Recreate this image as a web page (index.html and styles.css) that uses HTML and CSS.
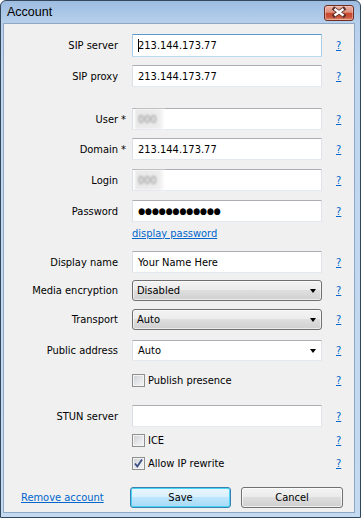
FILE: index.html
```html
<!DOCTYPE html>
<html>
<head>
<meta charset="utf-8">
<link rel="stylesheet" href="styles.css">
</head>
<body>
<div class="window">
  <div class="titlebar">
    <span class="title">Account</span>
    <div class="close">
      <svg width="30" height="17" viewBox="0 0 30 17">
        <path d="M10.5 5 L19.5 11.5 M19.5 5 L10.5 11.5" stroke="#5a2f2a" stroke-width="4" stroke-linecap="square" fill="none"/>
        <path d="M10.5 5 L19.5 11.5 M19.5 5 L10.5 11.5" stroke="#ffffff" stroke-width="2.2" stroke-linecap="butt" fill="none"/>
      </svg>
    </div>
  </div>
  <div class="client">
    <div class="row r1">
      <span class="lbl">SIP server</span>
      <div class="field focus"><span class="caret"></span>213.144.173.77</div>
      <a class="help">?</a>
    </div>
    <div class="row r2">
      <span class="lbl">SIP proxy</span>
      <div class="field">213.144.173.77</div>
      <a class="help">?</a>
    </div>
    <div class="row r3">
      <span class="lbl">User<span class="req">*</span></span>
      <div class="field"><span class="blur">000</span></div>
      <a class="help">?</a>
    </div>
    <div class="row r4">
      <span class="lbl">Domain<span class="req">*</span></span>
      <div class="field">213.144.173.77</div>
      <a class="help">?</a>
    </div>
    <div class="row r5">
      <span class="lbl">Login</span>
      <div class="field"><span class="blur">000</span></div>
      <a class="help">?</a>
    </div>
    <div class="row r6">
      <span class="lbl">Password</span>
      <div class="field"><span class="dots">●●●●●●●●●●●●</span></div>
      <a class="help">?</a>
    </div>
    <div class="row r7">
      <span></span>
      <a class="link">display password</a>
    </div>
    <div class="row r8">
      <span class="lbl">Display name</span>
      <div class="field">Your Name Here</div>
      <a class="help">?</a>
    </div>
    <div class="row r9">
      <span class="lbl">Media encryption</span>
      <div class="combo"><span>Disabled</span><span class="arrow"></span></div>
      <a class="help">?</a>
    </div>
    <div class="row r10">
      <span class="lbl">Transport</span>
      <div class="combo"><span>Auto</span><span class="arrow"></span></div>
      <a class="help">?</a>
    </div>
    <div class="row r11">
      <span class="lbl">Public address</span>
      <div class="field ecombo"><span>Auto</span><span class="arrow"></span></div>
      <a class="help">?</a>
    </div>
    <div class="row r12">
      <span></span>
      <div class="check"><span class="box"></span>Publish presence</div>
      <a class="help">?</a>
    </div>
    <div class="row r13">
      <span class="lbl">STUN server</span>
      <div class="field"></div>
      <a class="help">?</a>
    </div>
    <div class="row r14">
      <span></span>
      <div class="check"><span class="box"></span>ICE</div>
      <a class="help">?</a>
    </div>
    <div class="row r15">
      <span></span>
      <div class="check"><span class="box"><svg width="11" height="11" viewBox="0 0 11 11"><path d="M2 5.5 L4.3 8.5 L9 1.5" stroke="#3b4f86" stroke-width="1.8" fill="none"/></svg></span>Allow IP rewrite</div>
      <a class="help">?</a>
    </div>
    <div class="buttons">
      <a class="link remove">Remove account</a>
      <div class="btn default">Save</div>
      <div class="btn">Cancel</div>
    </div>
  </div>
</div>
</body>
</html>
```
FILE: styles.css
```css
body {
  margin: 0;
  font-family: "DejaVu Sans Condensed", "DejaVu Sans", sans-serif;
  font-stretch: condensed;
  font-size: 11px;
  color: #000;
}
.window {
  width: 361px;
  height: 518px;
  box-sizing: border-box;
  border: 1px solid #34465c;
  border-radius: 6px 6px 0 0;
  background: linear-gradient(#9dbde1, #b6cfeb 22px, #bfd6ef 60px, #c4daf1);
  padding: 0 5px 4px 2px;
  display: flex;
  flex-direction: column;
}
.titlebar {
  height: 22px;
  display: flex;
  align-items: center;
  justify-content: space-between;
}
.title {
  font-family: "Liberation Sans", sans-serif;
  font-stretch: normal;
  font-size: 12.5px;
  margin-left: 4px;
  color: #000;
}
.close {
  width: 30px;
  height: 16px;
  margin-right: 1px;
  margin-top: 1px;
  box-sizing: border-box;
  border: 1px solid #6e2d22;
  border-radius: 3px;
  background: linear-gradient(#eab1a3, #dd8f7c 45%, #c7482f 52%, #c9553a 80%, #e29278);
  box-shadow: inset 0 0 0 1px rgba(255, 220, 210, 0.45);
  display: flex;
  align-items: center;
  justify-content: center;
}
.close svg { display: block; margin: -1px; }
.client {
  flex: 1;
  background: #f0f0f0;
  border: 1px solid #8fa7c4;
  display: flex;
  flex-direction: column;
}
.row {
  display: grid;
  grid-template-columns: 114px 190px 20px;
  column-gap: 14px;
  align-items: center;
  height: 22px;
}
.r1 { margin-top: 10px; height: 23px; }
.r2 { margin-top: 8px; }
.r3 { margin-top: 21px; }
.r4 { margin-top: 8px; }
.r5 { margin-top: 9px; }
.r6 { margin-top: 9px; }
.r7 { margin-top: 4px; height: 14px; }
.r8 { margin-top: 11px; }
.r9 { margin-top: 7px; height: 21px; }
.r10 { margin-top: 8px; height: 21px; }
.r11 { margin-top: 10px; height: 21px; }
.r12 { margin-top: 11px; height: 17px; }
.r13 { margin-top: 16px; }
.r14 { margin-top: 5px; height: 17px; }
.r15 { margin-top: 6px; height: 17px; }
.lbl {
  text-align: right;
  white-space: nowrap;
}
.req {
  margin-left: 3px;
  margin-right: -8px;
}
.field {
  height: 100%;
  box-sizing: border-box;
  background: #fff;
  border: 1px solid;
  border-color: #abadb3 #e2e3ea #e3e9ef #dbdfe6;
  border-radius: 1px;
  display: flex;
  align-items: center;
  padding-left: 5px;
  white-space: nowrap;
}
.field.focus {
  border-color: #5b9ad0 #a9cde9 #b9daf0 #a9cde9;
}
.caret {
  display: inline-block;
  width: 1px;
  height: 13px;
  background: #000;
  margin-right: -1px;
}
.blur {
  color: #8a8a8a;
  filter: blur(1.3px);
  background: linear-gradient(90deg, #e9e9e9, #ececec 80%, #fff);
  padding: 0 8px 0 3px;
  margin-left: -3px;
  height: 100%;
  display: flex;
  align-items: center;
}
.dots {
  font-family: "DejaVu Sans", sans-serif;
  font-size: 9px;
  letter-spacing: -0.2px;
}
.help {
  color: #0066cc;
  text-decoration: underline;
}
.link {
  color: #0066cc;
  text-decoration: underline;
  white-space: nowrap;
}
.combo {
  height: 100%;
  box-sizing: border-box;
  border: 1px solid #707070;
  border-radius: 3px;
  background: linear-gradient(#f3f3f3, #ececec 45%, #dedede 50%, #d0d0d0);
  box-shadow: inset 0 0 0 1px rgba(255, 255, 255, 0.6);
  display: flex;
  align-items: center;
  justify-content: space-between;
  padding: 0 5px 0 4px;
}
.ecombo {
  justify-content: space-between;
  padding-right: 5px;
}
.arrow {
  width: 0;
  height: 0;
  border-left: 3.5px solid transparent;
  border-right: 3.5px solid transparent;
  border-top: 4px solid #000;
  margin-top: 1px;
}
.check {
  display: flex;
  align-items: center;
  gap: 3px;
  white-space: nowrap;
}
.box {
  width: 13px;
  height: 13px;
  box-sizing: border-box;
  border: 1px solid #8e8f8f;
  background: linear-gradient(135deg, #cbced3, #e8e9eb 60%, #f6f6f6);
  box-shadow: inset 0 0 0 1px #f4f4f4;
  display: flex;
  align-items: center;
  justify-content: center;
}
.box svg { display: block; }
.buttons {
  margin-top: 15px;
  display: grid;
  grid-template-columns: 116px 101px 102px;
  column-gap: 10px;
  align-items: center;
  height: 21px;
}
.remove { padding-left: 17px; }
.btn {
  height: 21px;
  box-sizing: border-box;
  border: 1px solid #707070;
  border-radius: 3px;
  background: linear-gradient(#f3f3f3, #ebebeb 45%, #dddddd 50%, #cfcfcf);
  box-shadow: inset 0 0 0 1px rgba(255, 255, 255, 0.7);
  display: flex;
  align-items: center;
  justify-content: center;
}
.btn.default {
  border-color: #3c7fb1;
  background: linear-gradient(#eaf6fd, #d9f0fc 45%, #bee6fd 50%, #a7d9f5);
  box-shadow: inset 0 0 0 1px #48d4f5;
}
```
